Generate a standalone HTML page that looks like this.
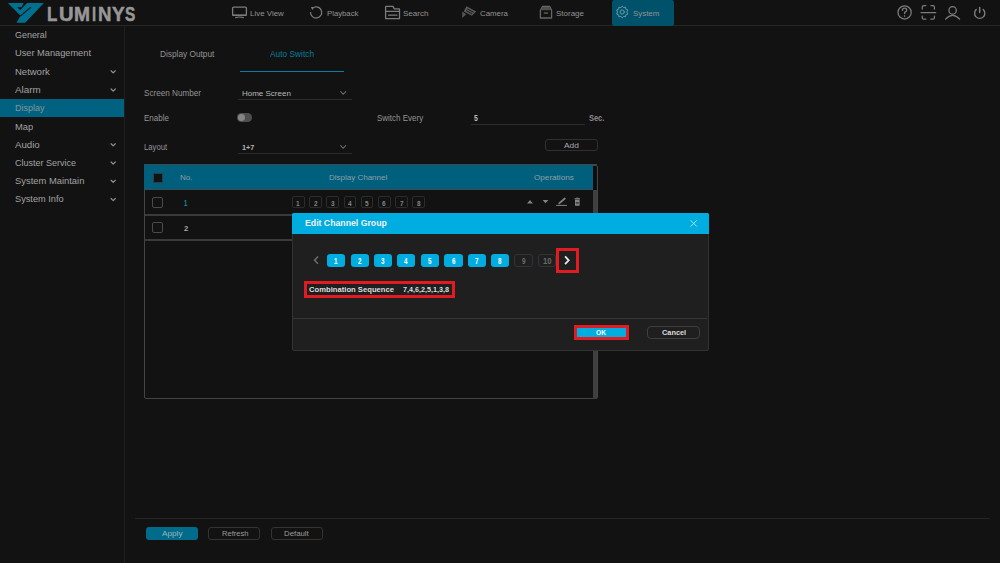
<!DOCTYPE html>
<html><head><meta charset="utf-8"><title>Display - Auto Switch</title>
<style>
html,body{margin:0;padding:0;}
body{width:1000px;height:563px;overflow:hidden;background:#121212;position:relative;font-family:"Liberation Sans",sans-serif;}
.t{position:absolute;white-space:nowrap;line-height:0;transform-origin:0 0;}
.r{position:absolute;box-sizing:border-box;}
svg{position:absolute;left:0;top:0;}
</style></head><body>
<!-- header -->
<div class="r" style="left:0;top:25px;width:1000px;height:1.2px;background:#262626"></div>
<div class="r" style="left:612px;top:0;width:62.4px;height:25.5px;background:#00526b;border-radius:2.5px"></div>
<!-- sidebar -->
<div class="r" style="left:124px;top:26px;width:1px;height:537px;background:#1f1f1f"></div>
<div class="r" style="left:0;top:98.8px;width:124.3px;height:18px;background:#006280"></div>
<!-- content -->
<div class="r" style="left:239.5px;top:70.5px;width:104.5px;height:1.3px;background:#0a7d9c"></div>
<div class="r" style="left:237.6px;top:98.8px;width:114px;height:1px;background:#2b2b2b"></div>
<div class="r" style="left:237.6px;top:153.2px;width:114px;height:1px;background:#2b2b2b"></div>
<div class="r" style="left:471px;top:124px;width:114px;height:1px;background:#2b2b2b"></div>
<div class="r" style="left:237.4px;top:113.4px;width:14.8px;height:8.6px;background:#4e4e4e;border-radius:4.3px"></div>
<div class="r" style="left:237.9px;top:114.1px;width:7.2px;height:7.2px;background:#858585;border-radius:50%"></div>
<div class="r" style="left:545px;top:138.5px;width:52.6px;height:12.7px;border:1px solid #303030;border-radius:3px"></div>
<!-- table -->
<div class="r" style="left:143.5px;top:164.5px;width:454px;height:234.5px;border:1.5px solid #444;border-radius:2px"></div>
<div class="r" style="left:143.5px;top:164.8px;width:449.5px;height:25.2px;background:#005f7c"></div>
<div class="r" style="left:143.5px;top:164.3px;width:453px;height:0.8px;background:#3a4a50"></div>
<div class="r" style="left:143.5px;top:189.4px;width:449.5px;height:1px;background:#3b4d53"></div>
<div class="r" style="left:593px;top:165.5px;width:3.4px;height:24.5px;background:#0c0c0c"></div>
<div class="r" style="left:593px;top:190px;width:4px;height:208.5px;background:#3f3f3f;border-radius:0 0 2px 2px"></div>
<div class="r" style="left:145px;top:213.8px;width:448px;height:2px;background:#3a3a3a"></div>
<div class="r" style="left:145px;top:238.8px;width:448px;height:2px;background:#3a3a3a"></div>
<div class="r" style="left:152.5px;top:172.6px;width:10.2px;height:10px;background:#121212;border:1px solid #2c3f46;border-radius:1.5px"></div>
<div class="r" style="left:152px;top:197px;width:10.8px;height:10.6px;border:1.3px solid #4a4a4a;border-radius:2px"></div>
<div class="r" style="left:152px;top:222.2px;width:10.8px;height:10.6px;border:1.3px solid #4a4a4a;border-radius:2px"></div>
<div class="r" style="left:292.0px;top:196.2px;width:12.5px;height:12.3px;border:1px solid #2c2c2c;border-radius:2px"></div>
<div class="r" style="left:309.2px;top:196.2px;width:12.5px;height:12.3px;border:1px solid #2c2c2c;border-radius:2px"></div>
<div class="r" style="left:326.4px;top:196.2px;width:12.5px;height:12.3px;border:1px solid #2c2c2c;border-radius:2px"></div>
<div class="r" style="left:343.6px;top:196.2px;width:12.5px;height:12.3px;border:1px solid #2c2c2c;border-radius:2px"></div>
<div class="r" style="left:360.8px;top:196.2px;width:12.5px;height:12.3px;border:1px solid #2c2c2c;border-radius:2px"></div>
<div class="r" style="left:378.0px;top:196.2px;width:12.5px;height:12.3px;border:1px solid #2c2c2c;border-radius:2px"></div>
<div class="r" style="left:395.2px;top:196.2px;width:12.5px;height:12.3px;border:1px solid #2c2c2c;border-radius:2px"></div>
<div class="r" style="left:412.4px;top:196.2px;width:12.5px;height:12.3px;border:1px solid #2c2c2c;border-radius:2px"></div>
<!-- bottom -->
<div class="r" style="left:135.4px;top:517.6px;width:854.6px;height:1.2px;background:#262626"></div>
<div class="r" style="left:145.8px;top:527.2px;width:52px;height:12.7px;background:#006b8a;border-radius:3px"></div>
<div class="r" style="left:208.2px;top:527.2px;width:52.3px;height:12.7px;border:1px solid #333;border-radius:3px"></div>
<div class="r" style="left:270.6px;top:527.2px;width:52.3px;height:12.7px;border:1px solid #333;border-radius:3px"></div>
<!-- dialog -->
<div class="r" style="left:291.6px;top:212.6px;width:417.4px;height:138px;background:#1f1f1f;border:1px solid #323232;border-radius:2px"></div>
<div class="r" style="left:292px;top:213px;width:416.6px;height:21px;background:#00ade1;border-radius:1.5px 1.5px 0 0"></div>
<div class="r" style="left:292.6px;top:317.6px;width:414.8px;height:1px;background:#363636"></div>
<div class="r" style="left:327.2px;top:254px;width:18.2px;height:13px;background:#00ade1;border-radius:3px"></div>
<div class="r" style="left:350.5px;top:254px;width:18.2px;height:13px;background:#00ade1;border-radius:3px"></div>
<div class="r" style="left:373.8px;top:254px;width:18.2px;height:13px;background:#00ade1;border-radius:3px"></div>
<div class="r" style="left:397.1px;top:254px;width:18.2px;height:13px;background:#00ade1;border-radius:3px"></div>
<div class="r" style="left:421.0px;top:254px;width:18.2px;height:13px;background:#00ade1;border-radius:3px"></div>
<div class="r" style="left:444.4px;top:254px;width:18.2px;height:13px;background:#00ade1;border-radius:3px"></div>
<div class="r" style="left:467.8px;top:254px;width:18.2px;height:13px;background:#00ade1;border-radius:3px"></div>
<div class="r" style="left:491.0px;top:254px;width:18.2px;height:13px;background:#00ade1;border-radius:3px"></div>
<div class="r" style="left:514.4px;top:254px;width:18.4px;height:13px;border:1px solid #333;border-radius:3px"></div>
<div class="r" style="left:538.0px;top:254px;width:18.4px;height:13px;border:1px solid #333;border-radius:3px"></div>
<div class="r" style="left:555.8px;top:248px;width:23.4px;height:24.7px;border:3px solid #e11b22"></div>
<div class="r" style="left:303.8px;top:281px;width:151.4px;height:16.8px;border:3px solid #e11b22"></div>
<div class="r" style="left:574.3px;top:325.2px;width:54.8px;height:14.9px;border:3px solid #e11b22;background:#00ade1"></div>
<div class="r" style="left:647.3px;top:325.6px;width:52.3px;height:13.5px;border:1px solid #3e3e3e;border-radius:4px"></div>
<svg width="1000" height="563" viewBox="0 0 1000 563">
<!-- logo -->
<polygon points="7.9,3.0 43.9,3.0 25.2,22.8 16.5,22.8 20.5,15.8" fill="#00708f"/>
<polygon points="23.8,2.5 27.6,2.5 20.26,9.96 17.1,7.2 21.6,7.2" fill="#121212"/>
<path d="M20.3 16.2 L30.9 7.1" stroke="#121212" stroke-width="1.1"/>
<!-- header icons -->
<g fill="none" stroke="#7c7c7c" stroke-width="1.3" stroke-linecap="round" stroke-linejoin="round">
<rect x="232.6" y="7.1" width="13.8" height="8.2" rx="1"/>
<path d="M233 15.2 H246" stroke-width="1.6"/>
<path d="M235.6 17.6 Q239.5 16.4 243.4 17.6" stroke-width="1.1"/>
<path d="M310.5 12.6 A5.6 5.6 0 1 0 314.6 7.0" stroke-width="1.25"/>
<path d="M385.6 18.6 V7 Q385.6 6.4 386.2 6.4 H393 L394.2 8.8 H399 Q399.5 8.8 399.5 9.3 V18.6 Z"/>
<path d="M385.6 11.4 H399.5"/>
<path d="M388.6 15.2 H396.8"/>
<path d="M540.4 18 V10.3 L542.6 6.4 H549.6 L551.6 10.3 V18 Z" stroke="#666"/>
<circle cx="622.2" cy="12" r="2.1" stroke="#6f9aa6" stroke-width="1"/>
<circle cx="904.6" cy="12.4" r="6.6" stroke-width="1.25"/>
<path d="M902.5 10.2 Q902.5 8.1 904.6 8.1 Q906.7 8.1 906.7 10.0 Q906.7 11.4 905.1 12.2 Q904.6 12.5 904.6 13.6" stroke-width="1.35"/>
<circle cx="904.6" cy="16.1" r="0.8" fill="#7c7c7c" stroke="none"/>
<path d="M922.3 9 V7 Q922.3 5.6 923.7 5.6 H925.8 M930.9 5.6 H933 Q934.4 5.6 934.4 7 V9 M934.4 16 V18 Q934.4 19.2 933 19.2 H930.9 M925.8 19.2 H923.7 Q922.3 19.2 922.3 18 V16" stroke-width="1.25"/>
<path d="M921 12.5 H935.7" stroke-width="1.25"/>
<circle cx="952.6" cy="10.4" r="3.7" stroke-width="1.25"/>
<path d="M945.6 19.2 Q952.6 11.6 959.6 19.2" stroke-width="1.25"/>
<path d="M976.2 9.6 A5.1 5.1 0 1 0 983.2 9.6" stroke-width="1.4"/>
<path d="M979.7 7.6 V12.4" stroke-width="1.5"/>
</g>
<polygon points="310.9,6.9 314.6,7.0 312.3,10.0" fill="#7c7c7c"/>
<!-- storage lid fill -->
<path d="M541 10.3 L542.9 6.9 H549.3 L551 10.3 Z" fill="#505050"/>
<rect x="543.8" y="12.3" width="4.3" height="1.5" fill="#5a5a5a"/>
<!-- camera -->
<g transform="translate(469.2,11.4) rotate(28)">
<path d="M-4.8 -3.2 H6.2 L4.4 2.6 H-4.8 Z" fill="#5a5a5a"/>
<path d="M-3 -1.3 H4.4 M-3 0.8 H3.6" stroke="#151515" stroke-width="0.9"/>
</g>
<polygon points="462.2,11.4 466.2,14.3 462.3,18" fill="#555"/>
<!-- gear -->
<g transform="translate(622.2,12)" fill="none" stroke="#6f9aa6" stroke-width="1">
<path d="M0 -5.8 L1.4 -4.5 L3.4 -4.7 L3.5 -2.9 L5.6 -2.0 L4.6 0 L5.6 2.0 L3.5 2.9 L3.4 4.7 L1.4 4.5 L0 5.8 L-1.4 4.5 L-3.4 4.7 L-3.5 2.9 L-5.6 2.0 L-4.6 0 L-5.6 -2.0 L-3.5 -2.9 L-3.4 -4.7 L-1.4 -4.5 Z" stroke-linejoin="round"/>
</g>
<!-- content chevrons -->
<g fill="none" stroke="#6a6a6a" stroke-width="1.1" stroke-linecap="round">
<path d="M340.7 91.7 L343.2 94.3 L345.7 91.7"/>
<path d="M340.7 145.7 L343.2 148.3 L345.7 145.7"/>
</g>
<!-- sidebar chevrons -->
<g fill="none" stroke="#8e8e8e" stroke-width="1.25" stroke-linecap="round" stroke-linejoin="round">
<path d="M111.1 70.8 L113.2 72.9 L115.3 70.8"/>
<path d="M111.1 89.0 L113.2 91.1 L115.3 89.0"/>
<path d="M111.1 143.8 L113.2 145.9 L115.3 143.8"/>
<path d="M111.1 162.0 L113.2 164.1 L115.3 162.0"/>
<path d="M111.1 180.3 L113.2 182.4 L115.3 180.3"/>
<path d="M111.1 198.5 L113.2 200.6 L115.3 198.5"/>
</g>
<!-- ops icons -->
<g fill="#848484">
<polygon points="527.1,203.4 530,200 532.9,203.4"/>
<polygon points="542.6,199.9 548.4,199.9 545.5,203.3"/>
<rect x="556.2" y="204.9" width="10.6" height="1" />
<rect x="574.6" y="198.2" width="5.4" height="1.2"/>
<rect x="576.2" y="197.7" width="2.2" height="0.8"/>
<path d="M575 199.8 H579.6 V205.2 Q579.6 205.8 579 205.8 H575.6 Q575 205.8 575 205.2 Z"/>
</g>
<rect x="575.8" y="202.3" width="3" height="1.3" fill="#2a2a2a"/>
<path d="M559.2 203.4 L564.8 198.5" stroke="#848484" stroke-width="1.7" stroke-linecap="round"/>
<!-- dialog glyphs -->
<path d="M690.6 220.3 L696.8 226.5 M696.8 220.3 L690.6 226.5" stroke="#bfe6f5" stroke-width="0.9"/>
<path d="M318 256.6 L314.6 260.2 L318 263.8" fill="none" stroke="#6e6e6e" stroke-width="1.5"/>
<path d="M565.1 256.4 L568.7 260.3 L565.1 264.2" fill="none" stroke="#e8e8e8" stroke-width="1.8"/>
</svg>

<span class="t" style="left:47.04px;top:14.25px;font-size:19.6px;color:#979797;font-weight:700;transform:scaleX(0.864);-webkit-text-stroke:0.5px #979797">L</span>
<span class="t" style="left:59.37px;top:14.25px;font-size:19.6px;color:#979797;font-weight:700;transform:scaleX(1.033);-webkit-text-stroke:0.5px #979797">U</span>
<span class="t" style="left:74.22px;top:14.25px;font-size:19.6px;color:#979797;font-weight:700;transform:scaleX(0.980);-webkit-text-stroke:0.5px #979797">M</span>
<span class="t" style="left:92.25px;top:14.25px;font-size:19.6px;color:#979797;font-weight:700;transform:scaleX(0.750);-webkit-text-stroke:0.5px #979797">I</span>
<span class="t" style="left:97.95px;top:14.25px;font-size:19.6px;color:#979797;font-weight:700;transform:scaleX(0.950);-webkit-text-stroke:0.5px #979797">N</span>
<span class="t" style="left:112.00px;top:14.25px;font-size:19.6px;color:#979797;font-weight:700;transform:scaleX(0.969);-webkit-text-stroke:0.5px #979797">Y</span>
<span class="t" style="left:125.40px;top:14.25px;font-size:19.6px;color:#979797;font-weight:700;transform:scaleX(0.785);-webkit-text-stroke:0.5px #979797">S</span>
<span class="t" style="left:250.00px;top:13.75px;font-size:8.0px;color:#929292;font-weight:400;transform:scaleX(0.991);">Live View</span>
<span class="t" style="left:327.00px;top:13.75px;font-size:8.0px;color:#929292;font-weight:400;transform:scaleX(0.968);">Playback</span>
<span class="t" style="left:403.00px;top:13.75px;font-size:8.0px;color:#929292;font-weight:400;transform:scaleX(1.004);">Search</span>
<span class="t" style="left:479.60px;top:13.75px;font-size:8.0px;color:#929292;font-weight:400;transform:scaleX(0.979);">Camera</span>
<span class="t" style="left:556.00px;top:13.75px;font-size:8.0px;color:#929292;font-weight:400;transform:scaleX(0.998);">Storage</span>
<span class="t" style="left:633.00px;top:13.75px;font-size:8.0px;color:#929292;font-weight:400;transform:scaleX(0.985);">System</span>
<span class="t" style="left:15.30px;top:35.25px;font-size:9.0px;color:#a2a2a2;font-weight:400;transform:scaleX(0.993);">General</span>
<span class="t" style="left:15.30px;top:53.25px;font-size:9.0px;color:#a2a2a2;font-weight:400;transform:scaleX(1.026);">User Management</span>
<span class="t" style="left:15.30px;top:72.25px;font-size:9.0px;color:#a2a2a2;font-weight:400;transform:scaleX(1.054);">Network</span>
<span class="t" style="left:15.30px;top:90.25px;font-size:9.0px;color:#a2a2a2;font-weight:400;transform:scaleX(1.095);">Alarm</span>
<span class="t" style="left:15.30px;top:108.25px;font-size:9.0px;color:#83969b;font-weight:400;transform:scaleX(1.003);">Display</span>
<span class="t" style="left:15.30px;top:127.25px;font-size:9.0px;color:#a2a2a2;font-weight:400;transform:scaleX(1.034);">Map</span>
<span class="t" style="left:15.30px;top:145.25px;font-size:9.0px;color:#a2a2a2;font-weight:400;transform:scaleX(1.073);">Audio</span>
<span class="t" style="left:15.30px;top:163.25px;font-size:9.0px;color:#a2a2a2;font-weight:400;transform:scaleX(1.001);">Cluster Service</span>
<span class="t" style="left:15.30px;top:181.25px;font-size:9.0px;color:#a2a2a2;font-weight:400;transform:scaleX(1.043);">System Maintain</span>
<span class="t" style="left:15.30px;top:199.25px;font-size:9.0px;color:#a2a2a2;font-weight:400;transform:scaleX(1.023);">System Info</span>
<span class="t" style="left:160.00px;top:54.75px;font-size:8.2px;color:#949494;font-weight:400;transform:scaleX(1.011);">Display Output</span>
<span class="t" style="left:269.50px;top:54.75px;font-size:8.2px;color:#087d9e;font-weight:400;transform:scaleX(1.019);">Auto Switch</span>
<span class="t" style="left:143.80px;top:93.75px;font-size:8.2px;color:#949494;font-weight:400;transform:scaleX(0.995);">Screen Number</span>
<span class="t" style="left:241.50px;top:93.75px;font-size:7.8px;color:#b8b8b8;font-weight:400;transform:scaleX(1.025);">Home Screen</span>
<span class="t" style="left:143.80px;top:118.75px;font-size:8.2px;color:#949494;font-weight:400;transform:scaleX(0.975);">Enable</span>
<span class="t" style="left:143.80px;top:147.75px;font-size:8.2px;color:#949494;font-weight:400;transform:scaleX(0.944);">Layout</span>
<span class="t" style="left:241.70px;top:147.75px;font-size:7.8px;color:#b4b4b4;font-weight:700;transform:scaleX(0.931);">1+7</span>
<span class="t" style="left:377.00px;top:118.75px;font-size:8.2px;color:#949494;font-weight:400;transform:scaleX(0.975);">Switch Every</span>
<span class="t" style="left:474.40px;top:118.75px;font-size:8.2px;color:#bdbdbd;font-weight:700;transform:scaleX(0.840);">5</span>
<span class="t" style="left:589.30px;top:118.75px;font-size:8.2px;color:#8c8c8c;font-weight:700;transform:scaleX(0.911);">Sec.</span>
<span class="t" style="left:564.00px;top:145.75px;font-size:7.8px;color:#a8a8a8;font-weight:400;transform:scaleX(1.071);">Add</span>
<span class="t" style="left:180.20px;top:177.75px;font-size:8.0px;color:#8e9fa4;font-weight:400;transform:scaleX(1.006);">No.</span>
<span class="t" style="left:328.80px;top:177.75px;font-size:8.0px;color:#8e9fa4;font-weight:400;transform:scaleX(0.999);">Display Channel</span>
<span class="t" style="left:533.80px;top:177.75px;font-size:8.0px;color:#8e9fa4;font-weight:400;transform:scaleX(1.017);">Operations</span>
<span class="t" style="left:183.80px;top:203.25px;font-size:8.4px;color:#0a87a9;font-weight:700;transform:scaleX(0.720);">1</span>
<span class="t" style="left:183.50px;top:228.75px;font-size:8.0px;color:#a8a8a8;font-weight:700;transform:scaleX(0.960);">2</span>
<span class="t" style="left:296.30px;top:203.75px;font-size:7.0px;color:#858585;font-weight:700;transform:scaleX(0.925);">1</span>
<span class="t" style="left:313.50px;top:203.75px;font-size:7.0px;color:#858585;font-weight:700;transform:scaleX(0.925);">2</span>
<span class="t" style="left:330.70px;top:203.75px;font-size:7.0px;color:#858585;font-weight:700;transform:scaleX(0.925);">3</span>
<span class="t" style="left:347.90px;top:203.75px;font-size:7.0px;color:#858585;font-weight:700;transform:scaleX(0.925);">4</span>
<span class="t" style="left:365.10px;top:203.75px;font-size:7.0px;color:#858585;font-weight:700;transform:scaleX(0.925);">5</span>
<span class="t" style="left:382.30px;top:203.75px;font-size:7.0px;color:#858585;font-weight:700;transform:scaleX(0.925);">6</span>
<span class="t" style="left:399.50px;top:203.75px;font-size:7.0px;color:#858585;font-weight:700;transform:scaleX(0.925);">7</span>
<span class="t" style="left:416.70px;top:203.75px;font-size:7.0px;color:#858585;font-weight:700;transform:scaleX(0.925);">8</span>
<span class="t" style="left:305.00px;top:222.75px;font-size:9.4px;color:#f2f2f2;font-weight:700;transform:scaleX(0.929);">Edit Channel Group</span>
<span class="t" style="left:309.00px;top:289.75px;font-size:8.0px;color:#dedede;font-weight:700;transform:scaleX(0.956);">Combination Sequence</span>
<span class="t" style="left:403.00px;top:289.75px;font-size:8.0px;color:#dedede;font-weight:700;transform:scaleX(0.897);">7,4,6,2,5,1,3,8</span>
<span class="t" style="left:334.40px;top:261.75px;font-size:8.2px;color:#ffffff;font-weight:700;transform:scaleX(0.760);">1</span>
<span class="t" style="left:357.70px;top:261.75px;font-size:8.2px;color:#ffffff;font-weight:700;transform:scaleX(0.760);">2</span>
<span class="t" style="left:381.00px;top:261.75px;font-size:8.2px;color:#ffffff;font-weight:700;transform:scaleX(0.760);">3</span>
<span class="t" style="left:404.30px;top:261.75px;font-size:8.2px;color:#ffffff;font-weight:700;transform:scaleX(0.760);">4</span>
<span class="t" style="left:428.20px;top:261.75px;font-size:8.2px;color:#ffffff;font-weight:700;transform:scaleX(0.760);">5</span>
<span class="t" style="left:451.60px;top:261.75px;font-size:8.2px;color:#ffffff;font-weight:700;transform:scaleX(0.760);">6</span>
<span class="t" style="left:475.00px;top:261.75px;font-size:8.2px;color:#ffffff;font-weight:700;transform:scaleX(0.760);">7</span>
<span class="t" style="left:498.20px;top:261.75px;font-size:8.2px;color:#ffffff;font-weight:700;transform:scaleX(0.760);">8</span>
<span class="t" style="left:521.60px;top:261.75px;font-size:8.2px;color:#6a6a6a;font-weight:700;transform:scaleX(0.800);">9</span>
<span class="t" style="left:542.60px;top:261.75px;font-size:8.2px;color:#6a6a6a;font-weight:700;transform:scaleX(0.942);">10</span>
<span class="t" style="left:596.20px;top:332.75px;font-size:7.8px;color:#ffffff;font-weight:700;transform:scaleX(0.854);">OK</span>
<span class="t" style="left:661.50px;top:332.75px;font-size:7.8px;color:#dcdcdc;font-weight:700;transform:scaleX(0.945);">Cancel</span>
<span class="t" style="left:162.00px;top:533.75px;font-size:8.0px;color:#9fb6bd;font-weight:400;transform:scaleX(1.024);">Apply</span>
<span class="t" style="left:221.50px;top:533.75px;font-size:8.0px;color:#9c9c9c;font-weight:400;transform:scaleX(0.943);">Refresh</span>
<span class="t" style="left:284.00px;top:533.75px;font-size:8.0px;color:#9c9c9c;font-weight:400;transform:scaleX(0.976);">Default</span>
</body></html>
